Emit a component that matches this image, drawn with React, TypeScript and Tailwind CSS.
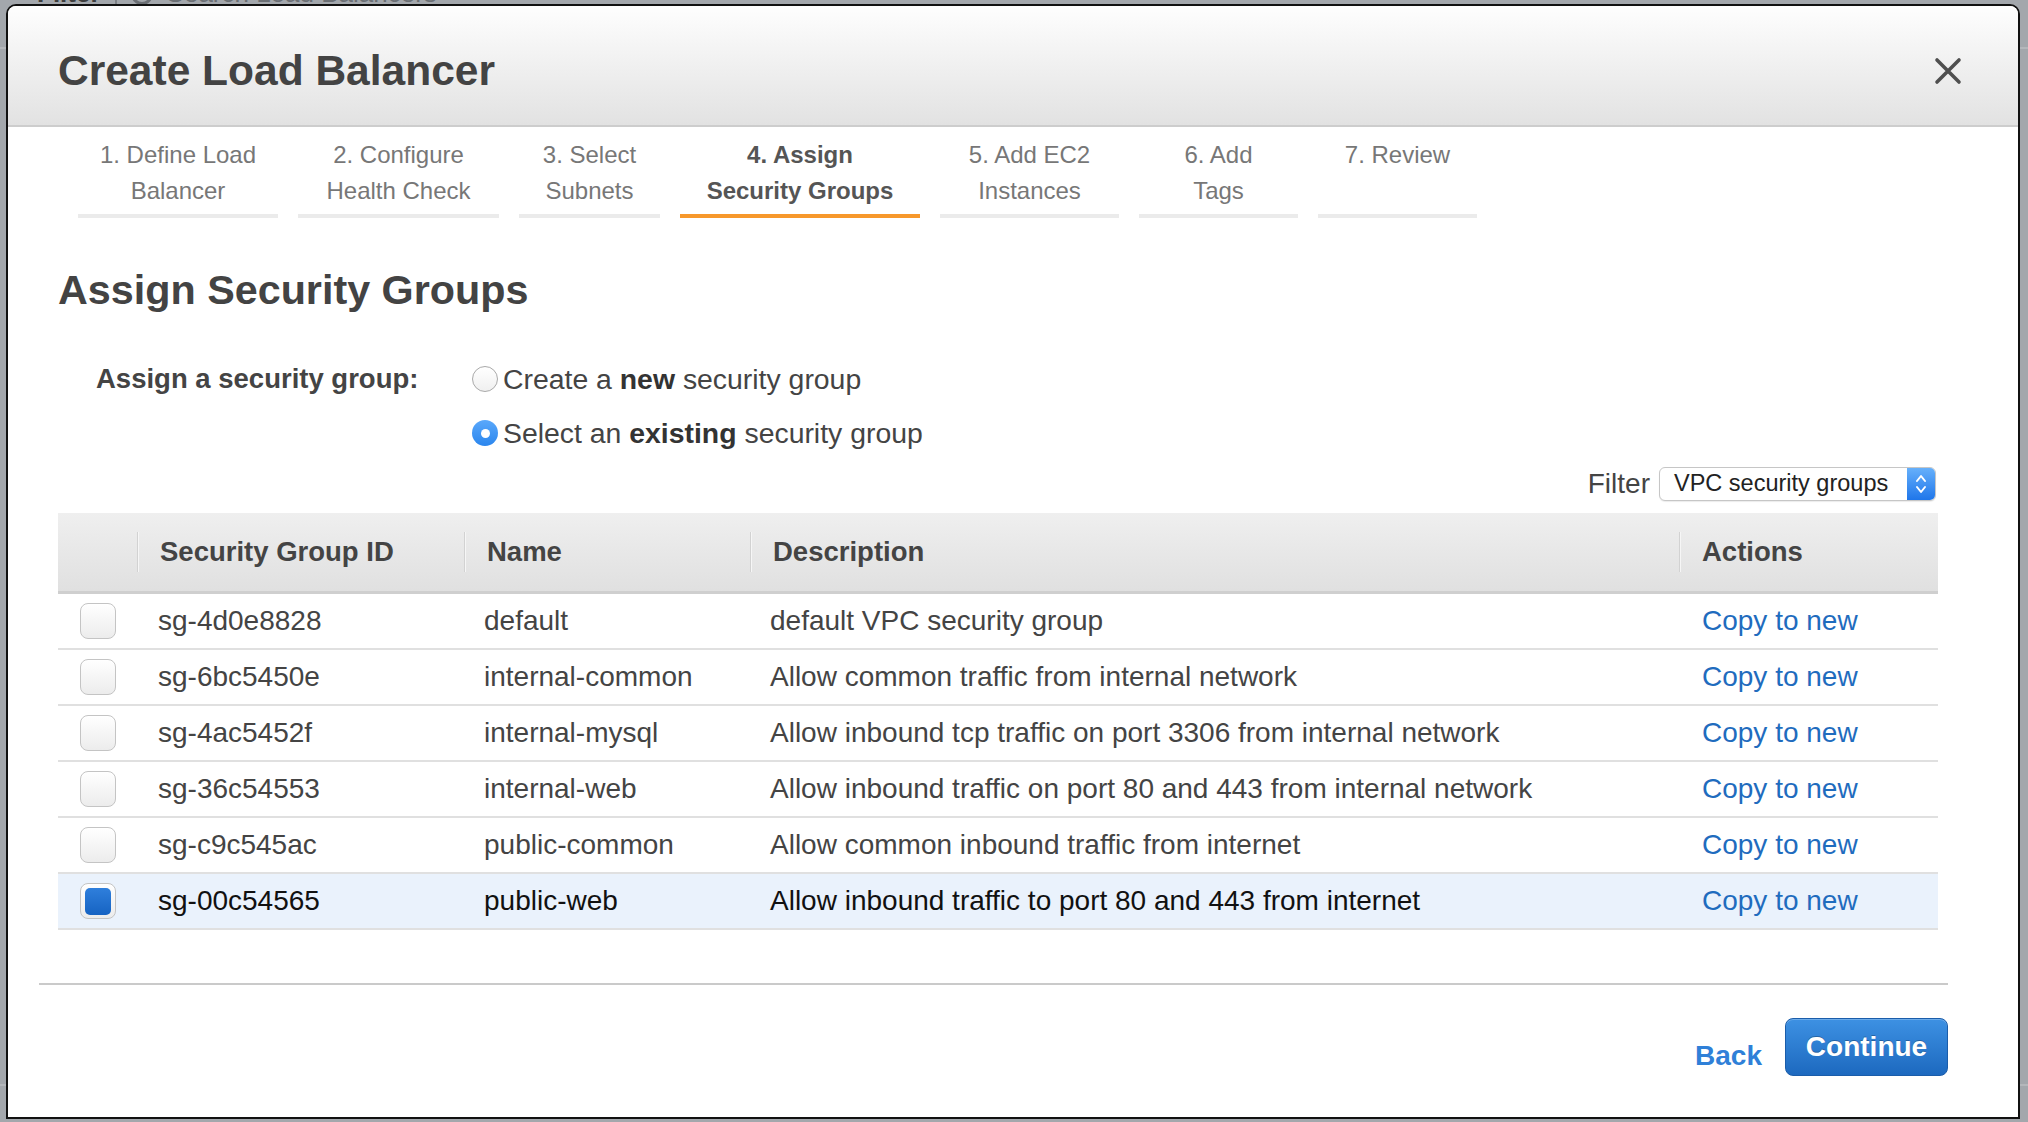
import React from "react";

const rows = [
  { id: "sg-4d0e8828", name: "default", desc: "default VPC security group", selected: false },
  { id: "sg-6bc5450e", name: "internal-common", desc: "Allow common traffic from internal network", selected: false },
  { id: "sg-4ac5452f", name: "internal-mysql", desc: "Allow inbound tcp traffic on port 3306 from internal network", selected: false },
  { id: "sg-36c54553", name: "internal-web", desc: "Allow inbound traffic on port 80 and 443 from internal network", selected: false },
  { id: "sg-c9c545ac", name: "public-common", desc: "Allow common inbound traffic from internet", selected: false },
  { id: "sg-00c54565", name: "public-web", desc: "Allow inbound traffic to port 80 and 443 from internet", selected: true },
];

const tabs = [
  { l1: "1. Define Load", l2: "Balancer", w: "w-[200px]", active: false },
  { l1: "2. Configure", l2: "Health Check", w: "w-[201px]", active: false },
  { l1: "3. Select", l2: "Subnets", w: "w-[141px]", active: false },
  { l1: "4. Assign", l2: "Security Groups", w: "w-[240px]", active: true },
  { l1: "5. Add EC2", l2: "Instances", w: "w-[179px]", active: false },
  { l1: "6. Add", l2: "Tags", w: "w-[159px]", active: false },
  { l1: "7. Review", l2: "", w: "w-[159px]", active: false },
];

function Checkbox({ checked }: { checked: boolean }) {
  return (
    <div className="w-[36px] h-[36px] rounded-[8px] border-[1.5px] border-[#c4c4c4] bg-[linear-gradient(to_bottom,#ffffff,#ececec)] flex items-center justify-center shadow-[inset_0_1px_0_#fff]">
      {checked && (
        <div className="w-[26px] h-[27px] rounded-[5px] bg-[linear-gradient(to_bottom,#2f7fdc,#1663c2)]" />
      )}
    </div>
  );
}

function Radio({ checked }: { checked: boolean }) {
  if (checked) {
    return (
      <div className="w-[26px] h-[26px] rounded-full bg-[linear-gradient(to_bottom,#5aa8fb,#2b86ee)] flex items-center justify-center shrink-0">
        <div className="w-[9px] h-[9px] rounded-full bg-white" />
      </div>
    );
  }
  return (
    <div className="w-[26px] h-[26px] rounded-full border-[1.5px] border-[#a9a9a9] bg-[linear-gradient(to_bottom,#ffffff,#f0f0f0)] shrink-0" />
  );
}

export default function App() {
  return (
    <div className="relative w-[2028px] h-[1122px] overflow-hidden bg-[#a3a7ac] font-['Liberation_Sans',Arial,sans-serif]">
      {/* page behind the modal */}
      <div className="absolute top-[-26px] left-[37px] flex items-center gap-[14px] text-[26px]">
        <span className="font-bold text-[#3d3d3d]">Filter</span>
        <span className="w-[2px] h-[30px] bg-[#7d8186]" />
        <span className="w-[22px] h-[22px] rounded-full border-[3px] border-[#6b6f74]" />
        <span className="text-[#6b6f74]">Search Load Balancers</span>
      </div>
      <div className="absolute top-[47px] left-0 w-full h-[2px] bg-[#b4b7bb]" />
      <div className="absolute top-[1084px] left-0 w-full h-[2px] bg-[#b4b7bb]" />

      {/* modal */}
      <div className="relative z-10 ml-[6px] mt-[4px] w-[2014px] h-[1115px] bg-white border-2 border-[#111] rounded-t-[10px] flex flex-col overflow-hidden">
        {/* header */}
        <div className="h-[121px] shrink-0 border-b-2 border-[#cdcdcd] bg-[linear-gradient(to_bottom,#fefefe,#e2e2e2)] flex items-center justify-between pl-[50px] pr-[56px] pt-[10px]">
          <h1 className="text-[42.5px] leading-[48px] font-bold text-[#434343]">Create Load Balancer</h1>
          <svg width="28" height="28" viewBox="0 0 28 28">
            <path d="M3 3 L25 25 M25 3 L3 25" stroke="#4f4f4f" strokeWidth="3.6" strokeLinecap="round" />
          </svg>
        </div>

        {/* tabs */}
        <div className="flex gap-[20px] pl-[70px] pt-[10px]">
          {tabs.map((t) => (
            <div key={t.l1} className={`${t.w} flex flex-col`}>
              <div
                className={`h-[72px] text-center text-[24px] leading-[36px] ${
                  t.active ? "font-bold text-[#555]" : "text-[#777]"
                }`}
              >
                <div>{t.l1}</div>
                {t.l2 && <div>{t.l2}</div>}
              </div>
              <div className={`mt-[5px] h-[4px] ${t.active ? "bg-[#f7982b]" : "bg-[#ebebeb]"}`} />
            </div>
          ))}
        </div>

        {/* body */}
        <div className="pl-[50px] pr-[80px]">
          <h2 className="mt-[48px] text-[41.3px] leading-[48px] font-bold text-[#434343]">Assign Security Groups</h2>

          <div className="mt-[45px] flex">
            <div className="w-[414px] pl-[38px] text-[27.5px] leading-[40px] font-bold text-[#444]">
              Assign a security group:
            </div>
            <div className="flex flex-col gap-[14px]">
              <div className="flex items-center gap-[5px] h-[40px] text-[28.4px] text-[#444]">
                <Radio checked={false} />
                <span>
                  Create a <b className="text-[#333]">new</b> security group
                </span>
              </div>
              <div className="flex items-center gap-[5px] h-[40px] text-[28.4px] text-[#444]">
                <Radio checked={true} />
                <span>
                  Select an <b className="text-[#333]">existing</b> security group
                </span>
              </div>
            </div>
          </div>

          <div className="mt-[10px] flex justify-end items-center pr-[2px]">
            <span className="text-[28px] text-[#444] mr-[9px]">Filter</span>
            <div className="w-[277px] h-[34px] rounded-[6px] border border-[#c6c6c6] bg-white flex items-center overflow-hidden shadow-[0_1px_1px_rgba(0,0,0,0.08)]">
              <span className="flex-1 pl-[14px] text-[23.5px] text-[#222] leading-none">VPC security groups</span>
              <div className="w-[28px] h-full bg-[linear-gradient(to_bottom,#66b0fb,#1f76ea)] flex items-center justify-center">
                <svg width="14" height="24" viewBox="0 0 14 24">
                  <path d="M3 9 L7 4 L11 9 M3 15 L7 20 L11 15" stroke="#fff" strokeWidth="2" fill="none" strokeLinecap="round" strokeLinejoin="round" />
                </svg>
              </div>
            </div>
          </div>

          {/* table */}
          <div className="mt-[8px]">
            <div className="h-[81px] grid grid-cols-[79px_327px_286px_929px_259px] bg-[linear-gradient(to_bottom,#efefef,#e0e0e0)] border-b-[3px] border-[#cfcfcf] text-[27.5px] font-bold text-[#444]">
              <div />
              {["Security Group ID", "Name", "Description", "Actions"].map((h) => (
                <div key={h} className="flex items-center">
                  <div className="w-[2px] h-[40px] bg-[#d2d2d2] border-r border-[#f6f6f6]" />
                  <span className="ml-[21px]">{h}</span>
                </div>
              ))}
            </div>
            {rows.map((r) => (
              <div
                key={r.id}
                className={`h-[56px] grid grid-cols-[79px_327px_286px_929px_259px] items-center border-b-2 border-[#e0e0e0] text-[28px] ${
                  r.selected ? "bg-[#eaf2fc] text-[#111]" : "bg-white text-[#444]"
                }`}
              >
                <div className="pl-[22px] flex items-center">
                  <Checkbox checked={r.selected} />
                </div>
                <div className="pl-[21px]">{r.id}</div>
                <div className="pl-[20px]">{r.name}</div>
                <div className="pl-[20px]">{r.desc}</div>
                <div className="pl-[23px] text-[#1f6cbe]">Copy to new</div>
              </div>
            ))}
          </div>
        </div>

        {/* footer */}
        <div className="mt-[53px] pl-[31px] pr-[70px]">
          <div className="h-[2px] bg-[#cacaca]" />
          <div className="mt-[33px] flex justify-end items-start gap-[23px]">
            <span className="mt-[17px] text-[28px] font-bold text-[#2f80d8]">Back</span>
            <button className="w-[163px] h-[58px] rounded-[8px] border border-[#1b5daa] bg-[linear-gradient(to_bottom,#3d91e3,#1d69bf)] text-white text-[28px] font-bold [text-shadow:0_-1px_0_rgba(0,0,0,0.25)] shadow-[inset_0_1px_0_rgba(255,255,255,0.25)]">
              Continue
            </button>
          </div>
        </div>
      </div>
    </div>
  );
}
